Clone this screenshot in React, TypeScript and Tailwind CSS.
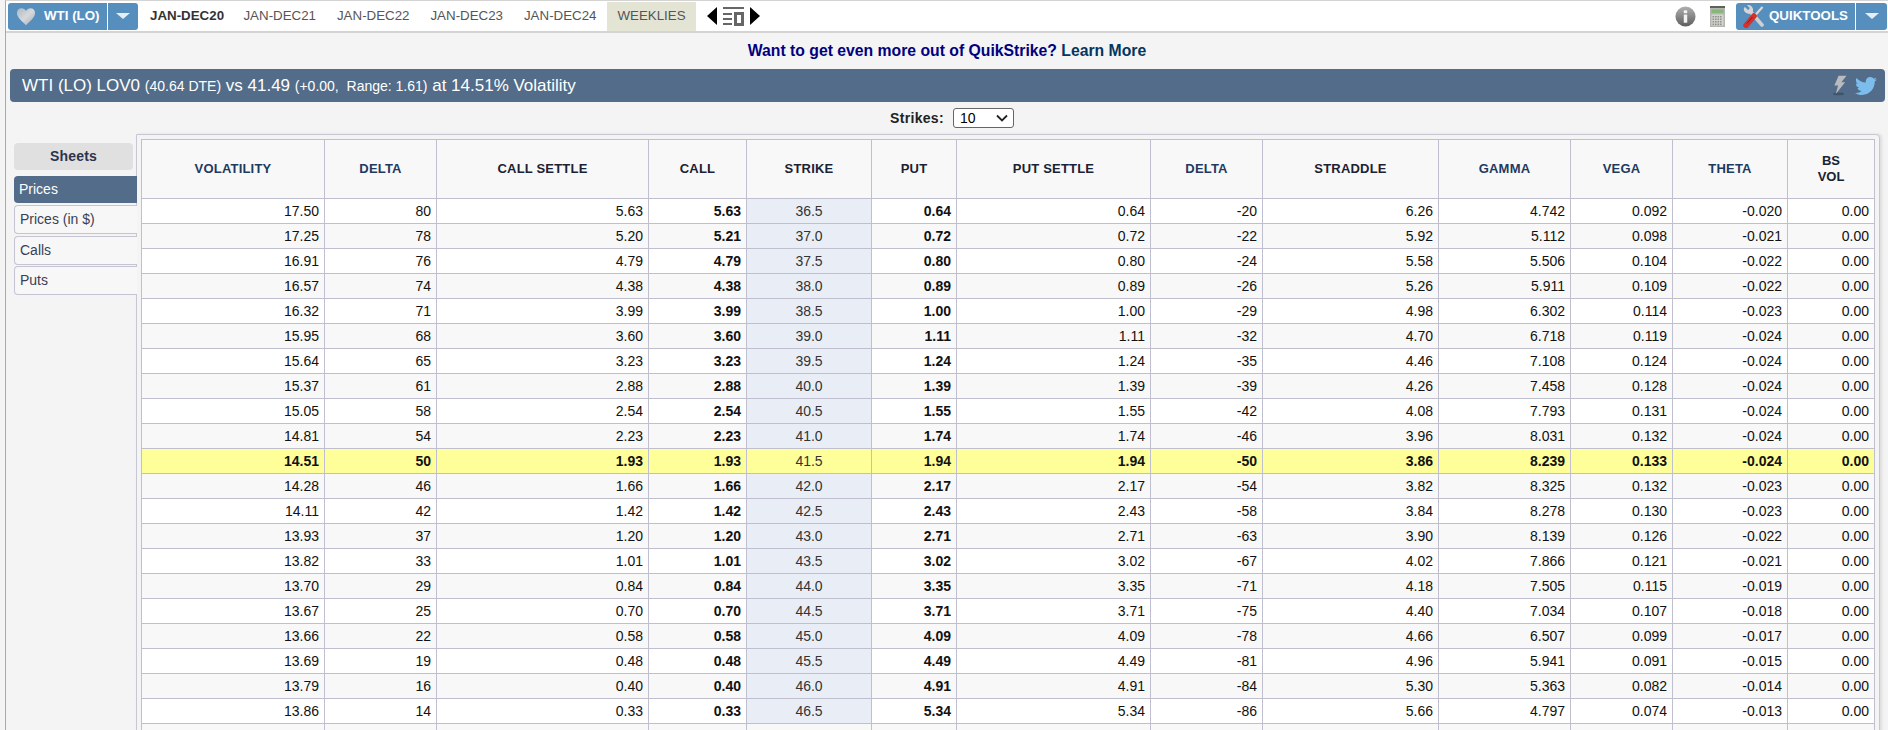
import { FaTwitter } from "react-icons/fa";

const rows = [
  ["17.50", "80", "5.63", "5.63", "36.5", "0.64", "0.64", "-20", "6.26", "4.742", "0.092", "-0.020", "0.00"],
  ["17.25", "78", "5.20", "5.21", "37.0", "0.72", "0.72", "-22", "5.92", "5.112", "0.098", "-0.021", "0.00"],
  ["16.91", "76", "4.79", "4.79", "37.5", "0.80", "0.80", "-24", "5.58", "5.506", "0.104", "-0.022", "0.00"],
  ["16.57", "74", "4.38", "4.38", "38.0", "0.89", "0.89", "-26", "5.26", "5.911", "0.109", "-0.022", "0.00"],
  ["16.32", "71", "3.99", "3.99", "38.5", "1.00", "1.00", "-29", "4.98", "6.302", "0.114", "-0.023", "0.00"],
  ["15.95", "68", "3.60", "3.60", "39.0", "1.11", "1.11", "-32", "4.70", "6.718", "0.119", "-0.024", "0.00"],
  ["15.64", "65", "3.23", "3.23", "39.5", "1.24", "1.24", "-35", "4.46", "7.108", "0.124", "-0.024", "0.00"],
  ["15.37", "61", "2.88", "2.88", "40.0", "1.39", "1.39", "-39", "4.26", "7.458", "0.128", "-0.024", "0.00"],
  ["15.05", "58", "2.54", "2.54", "40.5", "1.55", "1.55", "-42", "4.08", "7.793", "0.131", "-0.024", "0.00"],
  ["14.81", "54", "2.23", "2.23", "41.0", "1.74", "1.74", "-46", "3.96", "8.031", "0.132", "-0.024", "0.00"],
  ["14.51", "50", "1.93", "1.93", "41.5", "1.94", "1.94", "-50", "3.86", "8.239", "0.133", "-0.024", "0.00"],
  ["14.28", "46", "1.66", "1.66", "42.0", "2.17", "2.17", "-54", "3.82", "8.325", "0.132", "-0.023", "0.00"],
  ["14.11", "42", "1.42", "1.42", "42.5", "2.43", "2.43", "-58", "3.84", "8.278", "0.130", "-0.023", "0.00"],
  ["13.93", "37", "1.20", "1.20", "43.0", "2.71", "2.71", "-63", "3.90", "8.139", "0.126", "-0.022", "0.00"],
  ["13.82", "33", "1.01", "1.01", "43.5", "3.02", "3.02", "-67", "4.02", "7.866", "0.121", "-0.021", "0.00"],
  ["13.70", "29", "0.84", "0.84", "44.0", "3.35", "3.35", "-71", "4.18", "7.505", "0.115", "-0.019", "0.00"],
  ["13.67", "25", "0.70", "0.70", "44.5", "3.71", "3.71", "-75", "4.40", "7.034", "0.107", "-0.018", "0.00"],
  ["13.66", "22", "0.58", "0.58", "45.0", "4.09", "4.09", "-78", "4.66", "6.507", "0.099", "-0.017", "0.00"],
  ["13.69", "19", "0.48", "0.48", "45.5", "4.49", "4.49", "-81", "4.96", "5.941", "0.091", "-0.015", "0.00"],
  ["13.79", "16", "0.40", "0.40", "46.0", "4.91", "4.91", "-84", "5.30", "5.363", "0.082", "-0.014", "0.00"],
  ["13.86", "14", "0.33", "0.33", "46.5", "5.34", "5.34", "-86", "5.66", "4.797", "0.074", "-0.013", "0.00"],
];

const navy = "text-[#1f3a5f]";
const dark = "text-[#1a2233]";
const headers: [string, string][] = [
  ["VOLATILITY", navy],
  ["DELTA", navy],
  ["CALL SETTLE", dark],
  ["CALL", dark],
  ["STRIKE", dark],
  ["PUT", dark],
  ["PUT SETTLE", dark],
  ["DELTA", navy],
  ["STRADDLE", dark],
  ["GAMMA", navy],
  ["VEGA", navy],
  ["THETA", navy],
];
const widths = ["w-[183px]", "w-[112px]", "w-[212px]", "w-[98px]", "w-[125px]", "w-[85px]", "w-[194px]", "w-[112px]", "w-[176px]", "w-[132px]", "w-[102px]", "w-[115px]", "w-[87px]"];
const months = ["JAN-DEC21", "JAN-DEC22", "JAN-DEC23", "JAN-DEC24"];
const sheets = [
  ["Prices (in $)", "mt-[2px]"],
  ["Calls", "mt-[2px]"],
  ["Puts", "mt-[1px]"],
];

function Caret() {
  return <span className="block w-0 h-0 border-x-[7px] border-x-transparent border-t-[6px] border-t-[#e6eef5]" />;
}

function Heart() {
  return (
    <svg width="20" height="19" viewBox="0 0 22 20">
      <defs>
        <linearGradient id="heart" x1="0" y1="0" x2="1" y2="1">
          <stop offset="0" stopColor="#aeb8c0" />
          <stop offset="0.5" stopColor="#d6d9dc" />
          <stop offset="1" stopColor="#a4aeb6" />
        </linearGradient>
      </defs>
      <path d="M11 19.500C6 14.500 1 11 1 6.200 1 3 3.300 1 6 1c2.200 0 3.900 1.200 5 3 1.100-1.800 2.800-3 5-3 2.700 0 5 2 5 5.200C21 11 16 14.500 11 19.500z" fill="url(#heart)" />
    </svg>
  );
}

function ListIcon() {
  return (
    <svg width="21" height="19" viewBox="0 0 21 19" fill="#666">
      <rect x="0" y="0" width="21" height="2" />
      <rect x="0" y="6" width="9" height="2" />
      <rect x="0" y="11" width="9" height="2" />
      <rect x="0" y="16" width="9" height="2" />
      <path d="M11 5h10v14H11zm3 3v8h4V8z" fillRule="evenodd" />
    </svg>
  );
}

function InfoIcon() {
  return (
    <svg width="21" height="21" viewBox="0 0 22 22">
      <defs>
        <linearGradient id="info" x1="0" y1="0" x2="0" y2="1">
          <stop offset="0" stopColor="#b0b0b0" />
          <stop offset="1" stopColor="#5e5e5e" />
        </linearGradient>
      </defs>
      <circle cx="11" cy="11" r="10.500" fill="url(#info)" />
      <rect x="9.200" y="4.500" width="3.600" height="3.200" rx="1" fill="#f4f4f4" />
      <rect x="9.200" y="9" width="3.600" height="8.500" fill="#f4f4f4" />
    </svg>
  );
}

function CalcIcon() {
  const keys = [];
  for (let y = 10; y < 20; y += 2.500) {
    for (let x = 2.500; x < 12; x += 2.500) {
      keys.push(<rect key={`${x}-${y}`} x={x} y={y} width="1.600" height="1.500" fill="#8f918c" />);
    }
  }
  return (
    <svg width="15" height="21" viewBox="0 0 15 21">
      <rect x="0" y="0" width="15" height="21" fill="#b4b6b1" />
      <rect x="0" y="0" width="15" height="2" fill="#5d6158" />
      <rect x="1.500" y="3.500" width="12" height="3.500" fill="#86b67a" />
      <rect x="1.500" y="8.500" width="12" height="11" fill="#d3d4d0" />
      {keys}
    </svg>
  );
}

function ToolsIcon() {
  return (
    <svg width="21" height="24" viewBox="0 0 21 24">
      {/* wrench */}
      <path d="M7 7L19 21" stroke="#cfcfcf" strokeWidth="3.600" strokeLinecap="round" />
      <path d="M1 3.500a5 5 0 0 0 7.500 5.500l1.500-2A5 5 0 0 0 5.500 1L4 1.200l2.800 2.800-1.500 2.200L2.200 3.200z" fill="#d6d6d6" />
      {/* screwdriver */}
      <path d="M19.500 3L11 12.500" stroke="#d9d9d9" strokeWidth="2.200" />
      <path d="M3 21.500L11 12" stroke="#d2322d" strokeWidth="5.500" strokeLinecap="round" />
      <path d="M4 19.500L9.500 13" stroke="#8f1d1a" strokeWidth="1" />
    </svg>
  );
}

function BoltIcon() {
  return (
    <svg width="15" height="21" viewBox="0 0 16 22">
      <ellipse cx="7" cy="20" rx="6" ry="1.500" fill="#3f546b" />
      <path d="M7 0.500h8.500L10 7.500h4L4 20l2.500-9H2.500z" fill="#b9bcbf" />
    </svg>
  );
}

function Row({ cells, index }: { cells: string[]; index: number }) {
  const atm = cells[4] === "41.5";
  const bg = atm ? "bg-[#ffff99]" : index % 2 ? "bg-[#f8f8f8]" : "bg-white";
  return (
    <div className={`flex h-[25px] border-b border-[#bfbfd0] ${bg} text-[14px] text-[#111] ${atm ? "font-bold" : ""}`}>
      {cells.map((c, i) => (
        <div
          key={i}
          className={`${widths[i]} shrink-0 flex items-center border-r border-[#bfbfd0] ${
            i === 4 ? `justify-center text-[#333] ${atm ? "font-normal" : "bg-[#e9eef6]"}` : "justify-end pr-[5px]"
          } ${i === 3 || i === 5 ? "font-bold" : ""}`}
        >
          {c}
        </div>
      ))}
    </div>
  );
}

export default function App() {
  return (
    <div className="h-[730px] w-[1888px] overflow-hidden bg-[#f4f4f4] font-['Liberation_Sans',Arial,sans-serif]">
      <div className="h-full ml-[5px] border-l border-[#a9a9a9] border-t border-t-[#d4d4d4]">
        {/* Top bar */}
        <div className="h-[32px] flex items-center bg-white border-b-2 border-[#d4d4d4] pl-[2px] pr-[1px]">
          <div className="flex h-[27px] w-[130px] shrink-0 rounded-[3px] bg-[#568ebe] text-white">
            <div className="w-[100px] flex items-center gap-[8px] pl-[8px] border-r border-white">
              <Heart />
              <span className="text-[13.33px] font-bold">WTI (LO)</span>
            </div>
            <div className="flex-1 flex items-center justify-center"><Caret /></div>
          </div>
          <div className="flex h-[29px] items-center text-[13.33px] text-[#555] ml-[7px]">
            <span className="pl-[5px] w-[88px] font-bold text-[#333]">JAN-DEC20</span>
            {months.map((m) => (
              <span key={m} className="w-[93.500px] px-[4px] text-center">{m}</span>
            ))}
            <span className="w-[89px] h-full flex items-center justify-center bg-[#e3e4d4]">WEEKLIES</span>
          </div>
          <div className="flex items-center ml-[11px] gap-[6px]">
            <span className="w-0 h-0 border-y-[9px] border-y-transparent border-r-[10px] border-r-black" />
            <ListIcon />
            <span className="w-0 h-0 border-y-[9px] border-y-transparent border-l-[10px] border-l-black" />
          </div>
          <div className="ml-auto flex items-center">
            <InfoIcon />
            <div className="ml-[14px] flex"><CalcIcon /></div>
            <div className="ml-[11px] flex h-[27px] w-[151px] rounded-[3px] bg-[#568ebe] text-white">
              <div className="w-[120px] flex items-center gap-[5px] pl-[7px] border-r border-white">
                <ToolsIcon />
                <span className="text-[13.33px] font-bold">QUIKTOOLS</span>
              </div>
              <div className="flex-1 flex items-center justify-center"><Caret /></div>
            </div>
          </div>
        </div>

        {/* Promo */}
        <div className="h-[36px] flex items-center justify-center text-[15.75px] font-bold text-[#000080]">
          <span>Want to get even more out of QuikStrike? <span className="text-[#04365f]">Learn More</span></span>
        </div>

        {/* Title band */}
        <div className="h-[33px] ml-[4px] mr-[3px] flex items-center justify-between rounded-[4px] bg-[#526c89] pl-[12px] pr-[8px] text-white">
          <div className="text-[17px]">
            WTI (LO) LOV0 <span className="text-[14px]">(40.64 DTE)</span> vs 41.49 <span className="text-[14px]">(+0.00,&nbsp; Range: 1.61)</span> at 14.51% Volatility
          </div>
          <div className="flex items-center gap-[8px]">
            <BoltIcon />
            <FaTwitter className="text-[22px] text-[#7cbdec]" />
          </div>
        </div>

        {/* Strikes */}
        <div className="h-[32px] flex items-center justify-center gap-[9px] pl-[10px] text-[14px] font-bold tracking-[0.3px] text-[#222]">
          <span>Strikes:</span>
          <div className="w-[61px] h-[20px] flex items-center justify-between pl-[6px] pr-[5px] bg-white border border-[#666] rounded-[3px] font-normal tracking-normal text-[14px] text-black">
            10
            <svg width="12" height="8" viewBox="0 0 12 8" fill="none" stroke="#222" strokeWidth="1.800"><path d="M1 1.500l5 5 5-5" /></svg>
          </div>
        </div>

        <div className="flex items-start">
          {/* Sheets */}
          <div className="w-[123px] ml-[8px] pt-[9px] shrink-0 relative z-10 -mr-[1px]">
            <div className="h-[27px] w-[119px] flex items-center justify-center rounded-[4px] bg-[#e0e0e0] text-[14px] font-bold tracking-[0.2px] text-[#2a3350]">Sheets</div>
            <div className="mt-[6px] h-[27px] flex items-center pl-[5px] rounded-l-[4px] bg-[#526c89] text-[14px] text-white">Prices</div>
            {sheets.map(([s, mt]) => (
              <div key={s} className={`${mt} h-[29px] flex items-center pl-[5px] rounded-l-[4px] border border-r-0 border-[#c4c4d2] bg-[#f7f7f7] text-[14px] text-[#3a3f55]`}>{s}</div>
            ))}
          </div>

          {/* Table panel */}
          <div className="w-[1744px] border border-[#c8c8d4] rounded-tr-[4px] shadow-[2px_0_3px_#ddd] pt-[4px] pl-[4px] h-[700px] bg-[#f4f4f4]">
            <div className="w-[1734px] border-l border-t border-[#bfbfd0] bg-white">
              <div className="flex h-[59px] bg-[#f8f8f8] border-b border-[#bfbfd0]">
                {headers.map(([h, color], i) => (
                  <div key={i} className={`${widths[i]} ${color} shrink-0 flex items-center justify-center border-r border-[#bfbfd0] text-[13px] font-bold tracking-[0.2px]`}>{h}</div>
                ))}
                <div className={`${widths[12]} ${dark} shrink-0 flex items-center justify-center text-center border-r border-[#bfbfd0] text-[13px] font-bold leading-[16px]`}>BS<br />VOL</div>
              </div>
              {rows.map((r, ri) => (
                <Row key={ri} cells={r} index={ri} />
              ))}
              <div className="flex h-[25px] bg-[#f8f8f8]">
                {widths.map((w, i) => (
                  <div key={i} className={`${w} shrink-0 border-r border-[#bfbfd0]`} />
                ))}
              </div>
            </div>
          </div>
        </div>
      </div>
    </div>
  );
}
